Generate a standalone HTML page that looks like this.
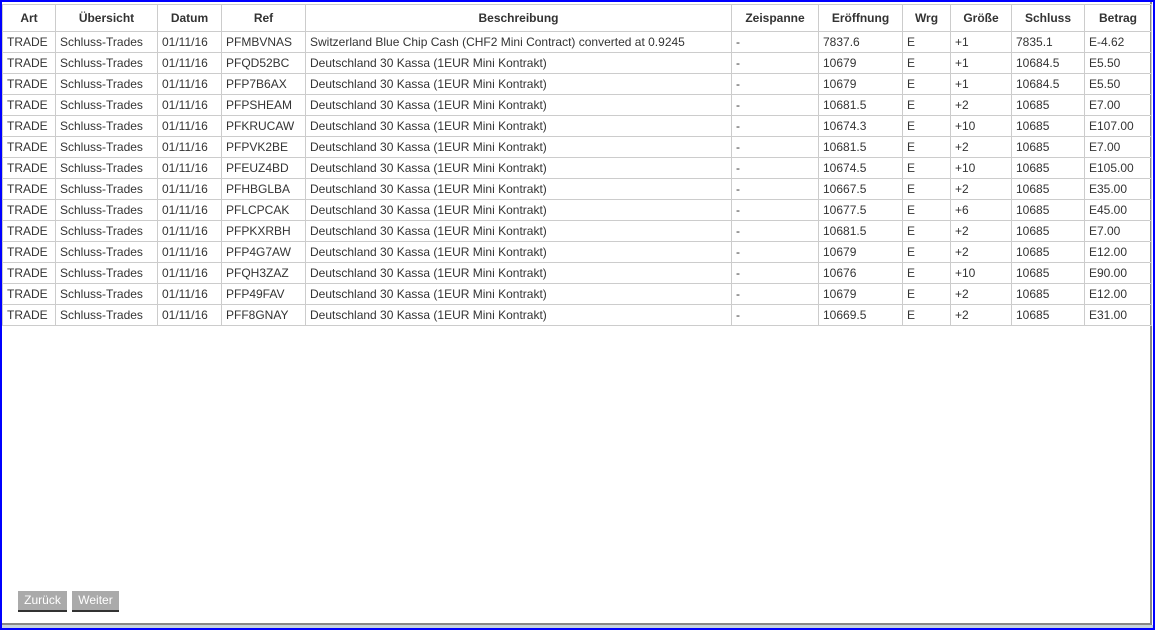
<!DOCTYPE html>
<html><head><meta charset="utf-8"><style>
*{margin:0;padding:0;box-sizing:border-box}
body{width:1155px;height:630px;background:#fff;position:relative;overflow:hidden;font-family:"Liberation Sans",Arial,sans-serif;font-size:12px;color:#333}
.bl{position:absolute;background:#00f}
#frame{position:absolute;left:2px;top:2px;width:1150px;height:623px;border-right:2px solid #888;border-bottom:2px solid #888;background:#fff}
#strip{position:absolute;left:2px;top:625px;width:1151px;height:3px;background:#c8d4dc}
table{position:absolute;left:2px;top:4px;border-collapse:collapse;table-layout:fixed;width:1149px}
td,th{border:1px solid #ccc;padding:0 4px;height:21px;white-space:nowrap;overflow:hidden;text-align:left;font-weight:normal}
th{height:27px;text-align:center;font-weight:bold;color:#333}
.btn{position:absolute;top:591px;height:21px;background:#aaa;color:#fff;border-bottom:2px solid #333;font-size:12px;line-height:19px;text-align:center}
</style></head><body>
<div id="frame"></div><div id="strip"></div>
<div class="bl" style="left:0;top:0;width:1155px;height:2px"></div>
<div class="bl" style="left:0;top:0;width:2px;height:630px"></div>
<div class="bl" style="left:1153px;top:0;width:2px;height:630px"></div>
<div class="bl" style="left:0;top:628px;width:1155px;height:2px"></div>
<table>
<colgroup><col style="width:53px"><col style="width:102px"><col style="width:64px"><col style="width:84px"><col style="width:426px"><col style="width:87px"><col style="width:84px"><col style="width:48px"><col style="width:61px"><col style="width:73px"><col style="width:67px"></colgroup>
<tr><th>Art</th><th>Übersicht</th><th>Datum</th><th>Ref</th><th>Beschreibung</th><th>Zeispanne</th><th>Eröffnung</th><th>Wrg</th><th>Größe</th><th>Schluss</th><th>Betrag</th></tr>
<tr><td>TRADE</td><td>Schluss-Trades</td><td>01/11/16</td><td>PFMBVNAS</td><td>Switzerland Blue Chip Cash (CHF2 Mini Contract) converted at 0.9245</td><td>-</td><td>7837.6</td><td>E</td><td>+1</td><td>7835.1</td><td>E-4.62</td></tr>
<tr><td>TRADE</td><td>Schluss-Trades</td><td>01/11/16</td><td>PFQD52BC</td><td>Deutschland 30 Kassa (1EUR Mini Kontrakt)</td><td>-</td><td>10679</td><td>E</td><td>+1</td><td>10684.5</td><td>E5.50</td></tr>
<tr><td>TRADE</td><td>Schluss-Trades</td><td>01/11/16</td><td>PFP7B6AX</td><td>Deutschland 30 Kassa (1EUR Mini Kontrakt)</td><td>-</td><td>10679</td><td>E</td><td>+1</td><td>10684.5</td><td>E5.50</td></tr>
<tr><td>TRADE</td><td>Schluss-Trades</td><td>01/11/16</td><td>PFPSHEAM</td><td>Deutschland 30 Kassa (1EUR Mini Kontrakt)</td><td>-</td><td>10681.5</td><td>E</td><td>+2</td><td>10685</td><td>E7.00</td></tr>
<tr><td>TRADE</td><td>Schluss-Trades</td><td>01/11/16</td><td>PFKRUCAW</td><td>Deutschland 30 Kassa (1EUR Mini Kontrakt)</td><td>-</td><td>10674.3</td><td>E</td><td>+10</td><td>10685</td><td>E107.00</td></tr>
<tr><td>TRADE</td><td>Schluss-Trades</td><td>01/11/16</td><td>PFPVK2BE</td><td>Deutschland 30 Kassa (1EUR Mini Kontrakt)</td><td>-</td><td>10681.5</td><td>E</td><td>+2</td><td>10685</td><td>E7.00</td></tr>
<tr><td>TRADE</td><td>Schluss-Trades</td><td>01/11/16</td><td>PFEUZ4BD</td><td>Deutschland 30 Kassa (1EUR Mini Kontrakt)</td><td>-</td><td>10674.5</td><td>E</td><td>+10</td><td>10685</td><td>E105.00</td></tr>
<tr><td>TRADE</td><td>Schluss-Trades</td><td>01/11/16</td><td>PFHBGLBA</td><td>Deutschland 30 Kassa (1EUR Mini Kontrakt)</td><td>-</td><td>10667.5</td><td>E</td><td>+2</td><td>10685</td><td>E35.00</td></tr>
<tr><td>TRADE</td><td>Schluss-Trades</td><td>01/11/16</td><td>PFLCPCAK</td><td>Deutschland 30 Kassa (1EUR Mini Kontrakt)</td><td>-</td><td>10677.5</td><td>E</td><td>+6</td><td>10685</td><td>E45.00</td></tr>
<tr><td>TRADE</td><td>Schluss-Trades</td><td>01/11/16</td><td>PFPKXRBH</td><td>Deutschland 30 Kassa (1EUR Mini Kontrakt)</td><td>-</td><td>10681.5</td><td>E</td><td>+2</td><td>10685</td><td>E7.00</td></tr>
<tr><td>TRADE</td><td>Schluss-Trades</td><td>01/11/16</td><td>PFP4G7AW</td><td>Deutschland 30 Kassa (1EUR Mini Kontrakt)</td><td>-</td><td>10679</td><td>E</td><td>+2</td><td>10685</td><td>E12.00</td></tr>
<tr><td>TRADE</td><td>Schluss-Trades</td><td>01/11/16</td><td>PFQH3ZAZ</td><td>Deutschland 30 Kassa (1EUR Mini Kontrakt)</td><td>-</td><td>10676</td><td>E</td><td>+10</td><td>10685</td><td>E90.00</td></tr>
<tr><td>TRADE</td><td>Schluss-Trades</td><td>01/11/16</td><td>PFP49FAV</td><td>Deutschland 30 Kassa (1EUR Mini Kontrakt)</td><td>-</td><td>10679</td><td>E</td><td>+2</td><td>10685</td><td>E12.00</td></tr>
<tr><td>TRADE</td><td>Schluss-Trades</td><td>01/11/16</td><td>PFF8GNAY</td><td>Deutschland 30 Kassa (1EUR Mini Kontrakt)</td><td>-</td><td>10669.5</td><td>E</td><td>+2</td><td>10685</td><td>E31.00</td></tr>
</table>
<div class="btn" style="left:18px;width:49px">Zurück</div>
<div class="btn" style="left:72px;width:47px">Weiter</div>
</body></html>
